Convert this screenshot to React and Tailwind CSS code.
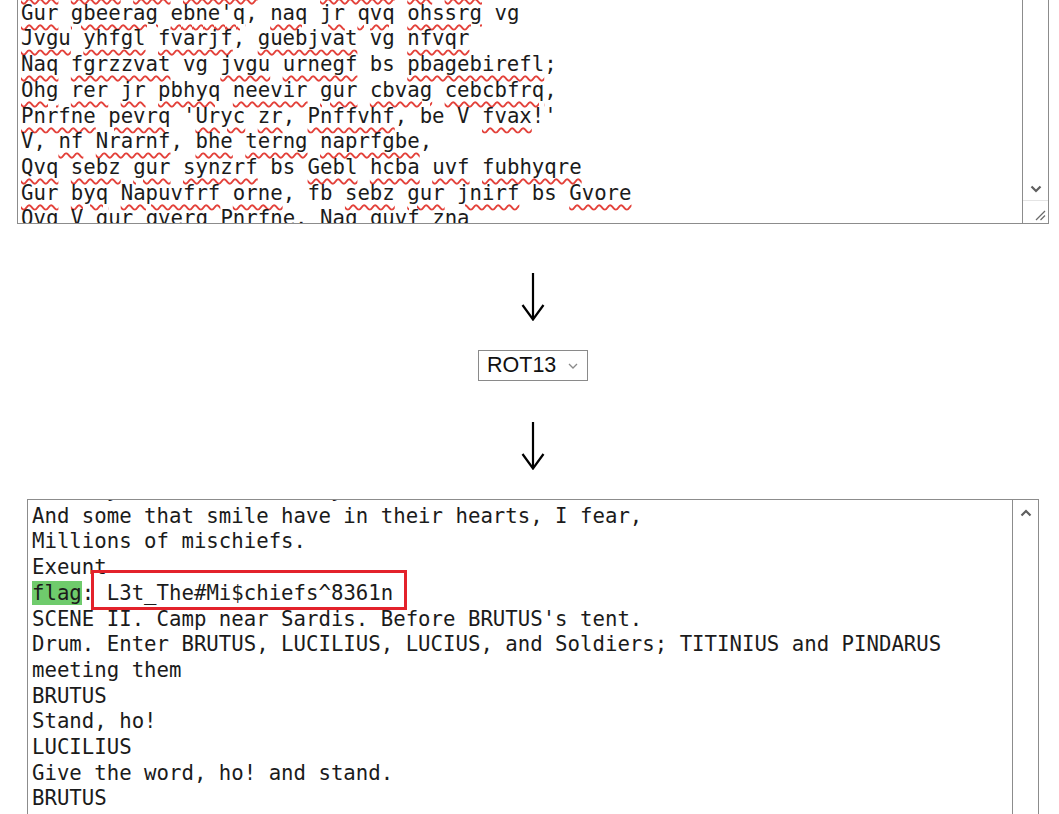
import React from "react";

const topLines = [
  "Naq onqr uvz sbyybj; fb vaqrrq ur qvq.",
  "Gur gbeerag ebne'q, naq jr qvq ohssrg vg",
  "Jvgu yhfgl fvarjf, guebjvat vg nfvqr",
  "Naq fgrzzvat vg jvgu urnegf bs pbagebirefl;",
  "Ohg rer jr pbhyq neevir gur cbvag cebcbfrq,",
  "Pnrfne pevrq 'Uryc zr, Pnffvhf, be V fvax!'",
  "V, nf Nrarnf, bhe terng naprfgbe,",
  "Qvq sebz gur synzrf bs Gebl hcba uvf fubhyqre",
  "Gur byq Napuvfrf orne, fb sebz gur jnirf bs Gvore",
  "Qvq V gur gverq Pnrfne. Naq guvf zna",
];

const okWords = new Set(["vg", "bs", "be", "V", "fb"]);

function Squiggly({ line }) {
  const parts = line.split(/([A-Za-z]+(?:'[A-Za-z]+)?)/);
  return (
    <>
      {parts.map((p, i) =>
        i % 2 === 1 && !okWords.has(p) ? (
          <span
            key={i}
            className="underline decoration-wavy decoration-[#e3413a] decoration-[1.5px] underline-offset-[4px]"
          >
            {p}
          </span>
        ) : (
          <React.Fragment key={i}>{p}</React.Fragment>
        )
      )}
    </>
  );
}

const bottomBefore = [
  "And bay'd about with many enemies;",
  "And some that smile have in their hearts, I fear,",
  "Millions of mischiefs.",
  "Exeunt",
];
const bottomAfter = [
  "SCENE II. Camp near Sardis. Before BRUTUS's tent.",
  "Drum. Enter BRUTUS, LUCILIUS, LUCIUS, and Soldiers; TITINIUS and PINDARUS",
  "meeting them",
  "BRUTUS",
  "Stand, ho!",
  "LUCILIUS",
  "Give the word, ho! and stand.",
  "BRUTUS",
  "What now, Lucilius! is Cassius near?",
  "LUCILIUS",
];

const mono = "font-['DejaVu_Sans_Mono',monospace] text-[20.7px] leading-[25.7px] text-[#1b1b1b] whitespace-pre";

function Chevron({ up }) {
  return (
    <svg width="12" height="8" viewBox="0 0 12 8">
      <polyline
        points={up ? "1.5,6.5 6,2 10.5,6.5" : "1.5,1.5 6,6 10.5,1.5"}
        fill="none"
        stroke="#5f5f5f"
        strokeWidth="2.2"
      />
    </svg>
  );
}

function Arrow() {
  return (
    <svg width="30" height="48" viewBox="0 0 30 48" className="block">
      <line x1="15" y1="0" x2="15" y2="46" stroke="#000" strokeWidth="2.2" />
      <polyline points="4.5,32 15,46.5 25.5,32" fill="none" stroke="#000" strokeWidth="2.2" />
    </svg>
  );
}

export default function App() {
  return (
    <div className="min-h-screen bg-white overflow-hidden">
      <div className="ml-[17px] w-[1032px] flex flex-col items-center">
        {/* Top textarea (scrolled) */}
        <div className="w-full h-[224px] border-x border-b border-[#8c8c8c] flex overflow-hidden">
          <div className="flex-1 overflow-hidden">
            <div className={`-mt-[25px] pl-[3px] ${mono}`}>
              {topLines.map((l, i) => (
                <div key={i}>
                  <Squiggly line={l} />
                </div>
              ))}
            </div>
          </div>
          <div className="w-[26px] border-l border-[#8c8c8c] flex flex-col justify-end">
            <div className="h-[22px] flex items-center justify-center">
              <Chevron />
            </div>
            <div className="h-[23px] border-t border-[#e4e4e4] flex items-end justify-end pr-[2px] pb-[2px]">
              <svg width="12" height="12" viewBox="0 0 12 12">
                <line x1="11" y1="2" x2="2" y2="11" stroke="#6a6a6a" strokeWidth="1.3" />
                <line x1="11" y1="6.5" x2="6.5" y2="11" stroke="#6a6a6a" strokeWidth="1.3" />
              </svg>
            </div>
          </div>
        </div>

        <div className="mt-[49px]">
          <Arrow />
        </div>

        <div className="mt-[29px] w-[110px] h-[31px] border border-[#8a8a8a] flex items-center pl-[8px] pr-[9px] justify-between font-['Liberation_Sans',Arial,sans-serif] text-[21.5px] text-[#111]">
          <span>ROT13</span>
          <svg width="10" height="6" viewBox="0 0 10 6">
            <polyline points="1,1 5,5 9,1" fill="none" stroke="#8a8a8a" strokeWidth="1.3" />
          </svg>
        </div>

        <div className="mt-[41px]">
          <Arrow />
        </div>

        {/* Bottom textarea */}
        <div className="mt-[29px] self-start ml-[10px] w-[1012px] h-[360px] border border-[#8c8c8c] flex overflow-hidden">
          <div className="flex-1 overflow-hidden">
            <div className={`-mt-[22px] pl-[4px] ${mono}`}>
              {bottomBefore.map((l, i) => (
                <div key={i}>{l}</div>
              ))}
              <div className="relative">
                <span className="bg-[#6fcb6c]">flag</span>: L3t_The#Mi$chiefs^8361n
                <div className="absolute left-[59px] top-[-11px] w-[316px] h-[40px] border-[3px] border-[#e3222b]" />
              </div>
              {bottomAfter.map((l, i) => (
                <div key={i}>{l}</div>
              ))}
            </div>
          </div>
          <div className="w-[26px] border-l border-[#8c8c8c] flex flex-col">
            <div className="h-[26px] flex items-center justify-center">
              <Chevron up />
            </div>
          </div>
        </div>
      </div>
    </div>
  );
}
